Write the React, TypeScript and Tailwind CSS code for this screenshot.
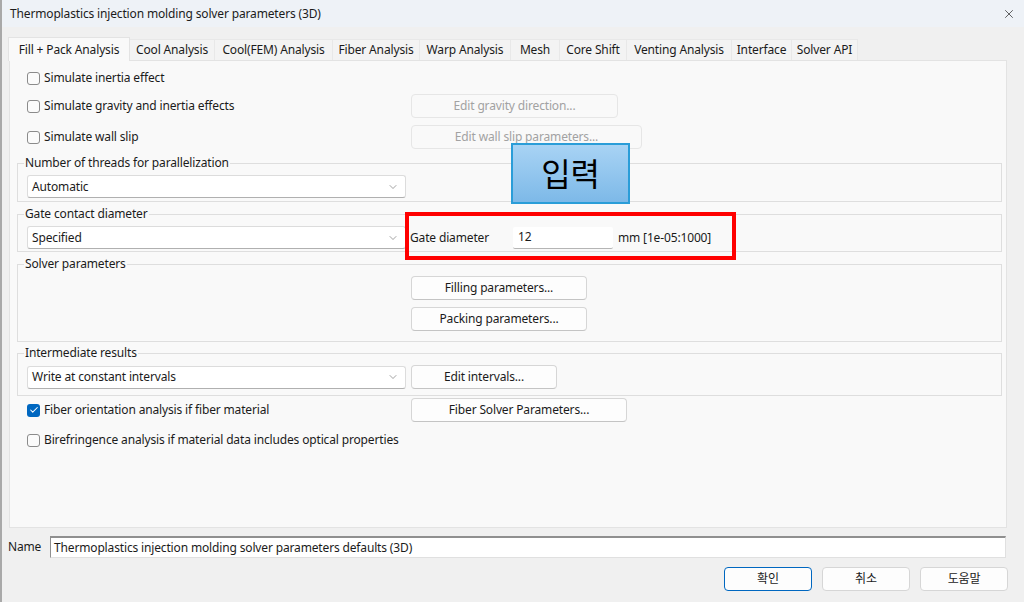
import React from 'react';
import { ChevronDown, Check, X } from 'lucide-react';

const tabs: { name: string; w: string }[] = [
  { name: 'Fill + Pack Analysis', w: 'w-[122px]' },
  { name: 'Cool Analysis', w: 'w-[85px]' },
  { name: 'Cool(FEM) Analysis', w: 'w-[118px]' },
  { name: 'Fiber Analysis', w: 'w-[87px]' },
  { name: 'Warp Analysis', w: 'w-[91px]' },
  { name: 'Mesh', w: 'w-[49px]' },
  { name: 'Core Shift', w: 'w-[67px]' },
  { name: 'Venting Analysis', w: 'w-[105px]' },
  { name: 'Interface', w: 'w-[60px]' },
  { name: 'Solver API', w: 'w-[66px]' },
];

const CheckBox = ({ checked, label }: { checked?: boolean; label: string }) => (
  <div className="flex items-center h-[22px]">
    {checked ? (
      <span className="w-[13px] h-[13px] rounded-[3px] bg-[#0067c0] flex items-center justify-center">
        <Check size={10} strokeWidth={2.5} className="text-white" />
      </span>
    ) : (
      <span className="w-[13px] h-[13px] rounded-[3px] border border-[#8b8b8b] bg-[#fbfbfb]" />
    )}
    <span className="ml-[4px]">{label}</span>
  </div>
);

const Btn = ({ label, w, disabled }: { label: string; w: string; disabled?: boolean }) => (
  <div
    className={`${w} h-[24px] rounded-[4px] border flex items-center justify-center ${
      disabled ? 'border-[#e6e6e6] bg-[#f9f9f9] text-[#a2a2a2]' : 'border-[#d6d6d6] border-b-[#c4c4c4] bg-[#fdfdfd] text-[#1b1b1b]'
    }`}
  >
    {label}
  </div>
);

const Select = ({ value }: { value: string }) => (
  <div className="w-[379px] h-[23px] rounded-[3px] border border-[#dcdcdc] border-b-[#b0b0b0] bg-white flex items-center pl-[4px] pr-[6px]">
    <span className="flex-1">{value}</span>
    <ChevronDown size={12} strokeWidth={1.3} className="text-[#707070]" />
  </div>
);

const Group = ({ title, children, className = '' }: { title: string; children: React.ReactNode; className?: string }) => (
  <fieldset className={`border border-[#dedede] w-[985px] pl-[9px] ${className}`}>
    <legend className="-ml-[3px] px-[1px] leading-[14px]">{title}</legend>
    {children}
  </fieldset>
);

export default function App() {
  return (
    <div
      className="relative w-[1024px] h-[602px] bg-[#f0f0f0] text-[12px] tracking-[-0.15px] text-[#1b1b1b] border-l-2 border-[#a9a9a9] overflow-hidden"
      style={{ fontFamily: '"Noto Sans", "Noto Sans CJK KR", sans-serif' }}
    >
      {/* title bar */}
      <div className="h-[27px] bg-[#eef2f7] flex items-center pl-[8px] pr-[8px]">
        <span className="flex-1">Thermoplastics injection molding solver parameters (3D)</span>
        <X size={14} strokeWidth={1.2} className="text-[#222]" />
      </div>

      {/* tabs */}
      <div className="mt-[10px] ml-[6px] flex items-end h-[23px]">
        {tabs.map((t, i) =>
          i === 0 ? (
            <div key={t.name} className={`${t.w} h-[24px] -mb-px relative z-10 bg-[#f9f9f9] border border-[#e3e3e3] border-b-0 flex items-center justify-center`}>
              {t.name}
            </div>
          ) : (
            <div key={t.name} className={`${t.w} h-[21px] bg-[#f3f3f3] border-r border-t border-[#e8e8e8] flex items-center justify-center`}>
              {t.name}
            </div>
          )
        )}
      </div>

      {/* panel */}
      <div className="ml-[7px] w-[998px] h-[468px] bg-[#f9f9f9] border border-[#e3e3e3] pl-[7px] pt-[6px]">
        <div className="pl-[10px]">
          <CheckBox label="Simulate inertia effect" />
          <div className="mt-[5px] flex items-center gap-[5px]">
            <div className="w-[379px]">
              <CheckBox label="Simulate gravity and inertia effects" />
            </div>
            <Btn label="Edit gravity direction..." w="w-[207px]" disabled />
          </div>
          <div className="mt-[7px] flex items-center gap-[5px]">
            <div className="w-[379px]">
              <CheckBox label="Simulate wall slip" />
            </div>
            <Btn label="Edit wall slip parameters..." w="w-[231px]" disabled />
          </div>
        </div>

        <Group title="Number of threads for parallelization" className="mt-[7px] pt-[5px] pb-[3px]">
          <Select value="Automatic" />
        </Group>

        <Group title="Gate contact diameter" className="mt-[5px] pt-[5px] pb-[2px]">
          <div className="flex items-center">
            <Select value="Specified" />
            <span className="ml-[4px] w-[103px]">Gate diameter</span>
            <div className="w-[100px] h-[22px] bg-white border-b border-[#b5b5b5] rounded-[2px] flex items-center pl-[5px]">12</div>
            <span className="ml-[5px]">mm [1e-05:1000]</span>
          </div>
        </Group>

        <Group title="Solver parameters" className="mt-[5px] pt-[5px] pb-[10px]">
          <div className="ml-[384px] flex flex-col gap-[7px]">
            <Btn label="Filling parameters..." w="w-[176px]" />
            <Btn label="Packing parameters..." w="w-[176px]" />
          </div>
        </Group>

        <Group title="Intermediate results" className="mt-[4px] pt-[5px] pb-[6px]">
          <div className="flex items-center gap-[5px]">
            <Select value="Write at constant intervals" />
            <Btn label="Edit intervals..." w="w-[146px]" />
          </div>
        </Group>

        <div className="pl-[10px]">
          <div className="mt-[2px] flex items-center gap-[5px]">
            <div className="w-[379px]">
              <CheckBox checked label="Fiber orientation analysis if fiber material" />
            </div>
            <Btn label="Fiber Solver Parameters..." w="w-[216px]" />
          </div>
          <div className="mt-[7px]">
            <CheckBox label="Birefringence analysis if material data includes optical properties" />
          </div>
        </div>
      </div>

      {/* name row */}
      <div className="mt-[8px] flex items-center pl-[6px]">
        <span className="w-[42px]">Name</span>
        <div className="w-[956px] h-[22px] bg-white border-t-2 border-l border-[#8f8f8f] border-b border-r border-b-[#e0e0e0] border-r-[#e0e0e0] flex items-center pl-[3px]">
          Thermoplastics injection molding solver parameters defaults (3D)
        </div>
      </div>

      {/* dialog buttons */}
      <div className="mt-[9px] flex justify-end gap-[10px] pr-[16px]">
        <div className="w-[88px] h-[24px] rounded-[4px] border border-[#0067c0] bg-[#fdfdfd] flex items-center justify-center">확인</div>
        <div className="w-[88px] h-[24px] rounded-[4px] border border-[#d6d6d6] bg-[#fdfdfd] flex items-center justify-center">취소</div>
        <div className="w-[88px] h-[24px] rounded-[4px] border border-[#d6d6d6] bg-[#fdfdfd] flex items-center justify-center">도움말</div>
      </div>

      {/* annotation overlays */}
      <div className="absolute left-[509px] top-[143px] w-[119px] h-[61px] border-2 border-[#2a9dd8] bg-gradient-to-b from-[#a8d3f4] to-[#7db9e8] flex items-center justify-center text-[32px] text-black leading-none">
        입력
      </div>
      <div className="absolute left-[403px] top-[212px] w-[331px] h-[48px] border-4 border-[#ff0000]" />
    </div>
  );
}
